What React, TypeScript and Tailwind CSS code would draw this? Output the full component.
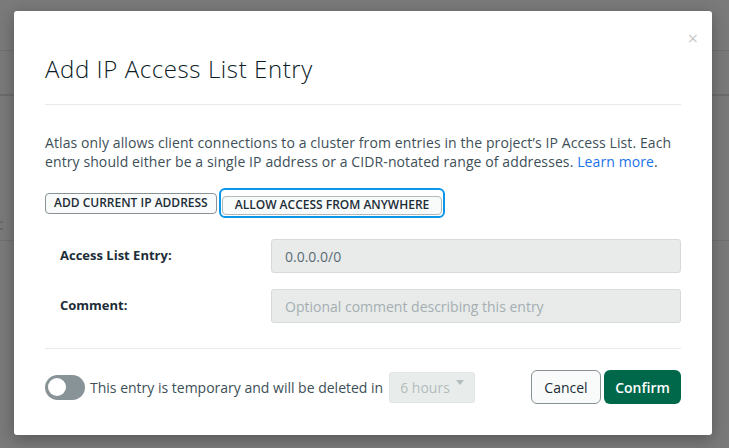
import React from "react";

const FONT = { fontFamily: "'Open Sans', 'Noto Sans', sans-serif" };

function Toggle() {
  return (
    <div className="relative h-[25px] w-[40px] shrink-0 rounded-full bg-[#889397]">
      <div className="absolute left-[3px] top-[3.5px] h-[18px] w-[18px] rounded-full bg-white" />
    </div>
  );
}

function FieldRow({ label, value, placeholder }: { label: string; value?: string; placeholder?: string }) {
  return (
    <div className="flex items-center">
      <div className="w-[226px] pl-[15px] text-[13px] font-bold text-[#1c2d38]">{label}</div>
      <div className="flex h-[34px] flex-1 items-center rounded-[3px] border border-[#d6dbda] bg-[#e8ebea] px-[13px] text-[14px]">
        {value ? (
          <span className="text-[#5c6c75]">{value}</span>
        ) : (
          <span className="text-[#a5aeb2]">{placeholder}</span>
        )}
      </div>
    </div>
  );
}

export default function App() {
  return (
    <div className="relative h-[448px] w-[729px] overflow-hidden bg-[#7a7a7a]" style={FONT}>
      {/* page behind the overlay */}
      <div className="flex flex-col">
        <div className="h-[51px] border-b border-[#6f6f6f]" />
        <div className="h-[45px] border-b-2 border-[#6c6c6c]" />
        <div className="flex h-[145px] flex-col justify-end gap-[5px] border-b border-[#707070] pb-[10px]">
          <div className="h-[2px] w-[3px] bg-[#6a6a6a]" />
          <div className="h-[2px] w-[3px] bg-[#6a6a6a]" />
        </div>
      </div>

      {/* modal */}
      <div className="absolute left-[14px] top-[11px] flex h-[424px] w-[698px] flex-col rounded-[3px] bg-white px-[31px] shadow-[0_4px_16px_rgba(0,0,0,0.3)]">
        <button className="absolute right-[14px] top-[18px] text-[18px] leading-none text-[#c8c8c8]">×</button>

        <div className="border-b border-[#e7eaea] pb-[19px] pt-[42px]">
          <h1 className="text-[24px] font-light leading-[32px] tracking-[0.6px] text-[#0b1c26]">Add IP Access List Entry</h1>
        </div>

        <p className="mt-[28px] text-[14px] leading-[19px] tracking-[0.1px] text-[#3d4f58]">
          Atlas only allows client connections to a cluster from entries in the project’s IP Access List. Each
          <br />
          entry should either be a single IP address or a CIDR-notated range of addresses.{" "}
          <span className="text-[#1a73e8]">Learn more</span>.
        </p>

        <div className="mt-[17px] flex items-center gap-[2px]">
          <button className="h-[21px] rounded-[4px] border border-[#889397] bg-[#f9fbfa] px-[8px] text-[12px] font-semibold leading-none text-[#1c2d38]">
            ADD CURRENT IP ADDRESS
          </button>
          <div className="rounded-[6px] border-2 border-[#0c96e8] p-[1px]">
            <button className="h-[19px] rounded-[4px] border border-[#b0b9bc] bg-[#f9fbfa] px-[12px] text-[12px] font-semibold leading-none text-[#1c2d38]">
              ALLOW ACCESS FROM ANYWHERE
            </button>
          </div>
        </div>

        <div className="mt-[21px] flex flex-col gap-[16px]">
          <FieldRow label="Access List Entry:" value="0.0.0.0/0" />
          <FieldRow label="Comment:" placeholder="Optional comment describing this entry" />
        </div>

        <div className="mt-[25px] border-t border-[#e7eaea]" />

        <div className="mt-[21px] flex items-center">
          <Toggle />
          <span className="ml-[5px] text-[14px] text-[#3d4f58]">This entry is temporary and will be deleted in</span>
          <div className="ml-[6px] flex h-[31px] w-[86px] items-center justify-between rounded-[3px] border border-[#e1e6e5] bg-[#e8edeb] pl-[10px] pr-[10px] text-[14px] text-[#b3bcbc]">
            <span>6 hours</span>
            <svg width="8" height="6" viewBox="0 0 8 6" className="mb-[8px]">
              <path d="M0 0 L8 0 L4 5 Z" fill="#b3bcbc" />
            </svg>
          </div>
          <div className="ml-auto flex gap-[3px]">
            <button className="h-[34px] w-[70px] rounded-[6px] border border-[#889397] bg-[#f9fbfa] text-[14px] text-[#1c2d38]">
              Cancel
            </button>
            <button className="h-[34px] w-[77px] rounded-[6px] bg-[#00684a] text-[14px] font-semibold text-white">
              Confirm
            </button>
          </div>
        </div>
      </div>
    </div>
  );
}
